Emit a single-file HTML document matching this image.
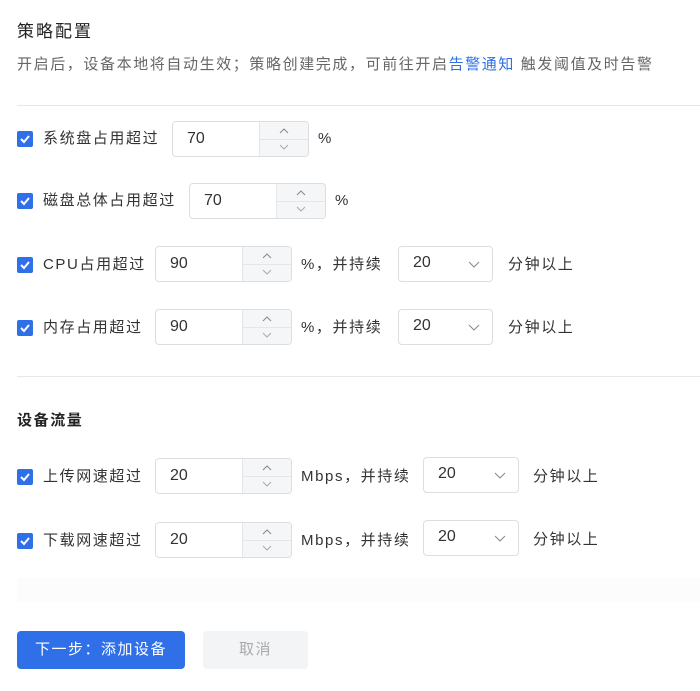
<!DOCTYPE html>
<html><head><meta charset="utf-8"><style>
*{margin:0;padding:0;box-sizing:border-box}
body{width:700px;height:691px;background:#fff;font-family:"Liberation Sans","Noto Sans CJK SC",sans-serif;color:#333;position:relative;overflow:hidden}
.a{position:absolute;white-space:nowrap}
.t{font-size:15px;line-height:20px;letter-spacing:1.6px}
.cb{position:absolute;width:16px;height:16px;background:#2f6fe8;border-radius:2px}
.cb svg{position:absolute;left:2px;top:2px}
.inp{position:absolute;height:36px;border:1px solid #dcdee2;border-radius:4px;background:#fff}
.inp .v{position:absolute;left:14px;top:8px;font-size:16px;color:#333}
.st{position:absolute;right:0;top:0;width:49px;height:34px;background:#f5f6f8;border-left:1px solid #e4e6ea;border-radius:0 4px 4px 0}
.st:after{content:"";position:absolute;left:0;right:0;top:17px;border-top:1px solid #e4e6ea}
.st svg{position:absolute;left:19px}
.sel{position:absolute;width:95px;height:36px;border:1px solid #dcdee2;border-radius:4px}
.sel .v{position:absolute;left:14px;top:7px;font-size:16px;color:#333}
.sel svg{position:absolute;right:12px;top:14px}
.hr{position:absolute;left:17px;right:0;border-top:1px solid #e8e8e8}
</style></head><body>
<div class="a" style="left:17px;top:17px;font-size:17px;letter-spacing:2px;color:#222">策略配置</div>
<div class="a" style="left:17px;top:53px;font-size:15px;letter-spacing:1.6px;color:#666">开启后，设备本地将自动生效；策略创建完成，可前往开启<span style="color:#2f6fe8">告警通知</span> 触发阈值及时告警</div>
<div class="hr" style="top:105px"></div>
<div class="hr" style="top:376px"></div>
<div class="a" style="left:17px;top:409px;font-size:15px;letter-spacing:1.6px;font-weight:bold;color:#222">设备流量</div>
<div class="a" style="left:17px;top:578px;width:683px;height:24px;background:#fcfcfd"></div>

<!-- row 1 -->
<div class="cb" style="left:17px;top:131px"><svg width="12" height="12"><path d="M2 6l3 3 5-6" stroke="#fff" stroke-width="2" fill="none"/></svg></div>
<div class="a t" style="left:43px;top:129px">系统盘占用超过</div>
<div class="inp" style="left:172px;top:121px;width:137px"><span class="v">70</span><div class="st"><svg width="10" height="8" style="top:5px"><path d="M1 6l4-4 4 4" stroke="#888" fill="none"/></svg><svg width="10" height="8" style="top:21px"><path d="M1 2l4 4 4-4" stroke="#aaa" fill="none"/></svg></div></div>
<div class="a t" style="left:318px;top:129px">%</div>

<!-- row 2 -->
<div class="cb" style="left:17px;top:193px"><svg width="12" height="12"><path d="M2 6l3 3 5-6" stroke="#fff" stroke-width="2" fill="none"/></svg></div>
<div class="a t" style="left:43px;top:191px">磁盘总体占用超过</div>
<div class="inp" style="left:189px;top:183px;width:137px"><span class="v">70</span><div class="st"><svg width="10" height="8" style="top:5px"><path d="M1 6l4-4 4 4" stroke="#888" fill="none"/></svg><svg width="10" height="8" style="top:21px"><path d="M1 2l4 4 4-4" stroke="#aaa" fill="none"/></svg></div></div>
<div class="a t" style="left:335px;top:191px">%</div>

<!-- row 3 -->
<div class="cb" style="left:17px;top:257px"><svg width="12" height="12"><path d="M2 6l3 3 5-6" stroke="#fff" stroke-width="2" fill="none"/></svg></div>
<div class="a t" style="left:43px;top:255px">CPU占用超过</div>
<div class="inp" style="left:155px;top:246px;width:137px"><span class="v">90</span><div class="st"><svg width="10" height="8" style="top:5px"><path d="M1 6l4-4 4 4" stroke="#888" fill="none"/></svg><svg width="10" height="8" style="top:21px"><path d="M1 2l4 4 4-4" stroke="#aaa" fill="none"/></svg></div></div>
<div class="a t" style="left:301px;top:255px">%，并持续</div>
<div class="sel" style="left:398px;top:246px"><span class="v">20</span><svg width="12" height="8"><path d="M1 1l5 5 5-5" stroke="#888" fill="none"/></svg></div>
<div class="a t" style="left:508px;top:255px">分钟以上</div>

<!-- row 4 -->
<div class="cb" style="left:17px;top:320px"><svg width="12" height="12"><path d="M2 6l3 3 5-6" stroke="#fff" stroke-width="2" fill="none"/></svg></div>
<div class="a t" style="left:43px;top:318px">内存占用超过</div>
<div class="inp" style="left:155px;top:309px;width:137px"><span class="v">90</span><div class="st"><svg width="10" height="8" style="top:5px"><path d="M1 6l4-4 4 4" stroke="#888" fill="none"/></svg><svg width="10" height="8" style="top:21px"><path d="M1 2l4 4 4-4" stroke="#aaa" fill="none"/></svg></div></div>
<div class="a t" style="left:301px;top:318px">%，并持续</div>
<div class="sel" style="left:398px;top:309px"><span class="v">20</span><svg width="12" height="8"><path d="M1 1l5 5 5-5" stroke="#888" fill="none"/></svg></div>
<div class="a t" style="left:508px;top:318px">分钟以上</div>

<!-- row 5 -->
<div class="cb" style="left:17px;top:469px"><svg width="12" height="12"><path d="M2 6l3 3 5-6" stroke="#fff" stroke-width="2" fill="none"/></svg></div>
<div class="a t" style="left:43px;top:467px">上传网速超过</div>
<div class="inp" style="left:155px;top:458px;width:137px"><span class="v">20</span><div class="st"><svg width="10" height="8" style="top:5px"><path d="M1 6l4-4 4 4" stroke="#888" fill="none"/></svg><svg width="10" height="8" style="top:21px"><path d="M1 2l4 4 4-4" stroke="#aaa" fill="none"/></svg></div></div>
<div class="a t" style="left:301px;top:467px">Mbps，并持续</div>
<div class="sel" style="left:423px;top:457px;width:96px"><span class="v">20</span><svg width="12" height="8"><path d="M1 1l5 5 5-5" stroke="#888" fill="none"/></svg></div>
<div class="a t" style="left:533px;top:467px">分钟以上</div>

<!-- row 6 -->
<div class="cb" style="left:17px;top:533px"><svg width="12" height="12"><path d="M2 6l3 3 5-6" stroke="#fff" stroke-width="2" fill="none"/></svg></div>
<div class="a t" style="left:43px;top:531px">下载网速超过</div>
<div class="inp" style="left:155px;top:522px;width:137px"><span class="v">20</span><div class="st"><svg width="10" height="8" style="top:5px"><path d="M1 6l4-4 4 4" stroke="#888" fill="none"/></svg><svg width="10" height="8" style="top:21px"><path d="M1 2l4 4 4-4" stroke="#aaa" fill="none"/></svg></div></div>
<div class="a t" style="left:301px;top:531px">Mbps，并持续</div>
<div class="sel" style="left:423px;top:520px;width:96px"><span class="v">20</span><svg width="12" height="8"><path d="M1 1l5 5 5-5" stroke="#888" fill="none"/></svg></div>
<div class="a t" style="left:533px;top:530px">分钟以上</div>

<div class="a" style="left:17px;top:631px;width:168px;height:38px;background:#2f6fe8;border-radius:4px;color:#fff;font-size:15px;letter-spacing:1.5px;line-height:38px;text-align:center">下一步：添加设备</div>
<div class="a" style="left:203px;top:631px;width:105px;height:38px;background:#f3f4f6;border-radius:4px;color:#aaa;font-size:15px;letter-spacing:1.5px;line-height:38px;text-align:center">取消</div>
</body></html>
